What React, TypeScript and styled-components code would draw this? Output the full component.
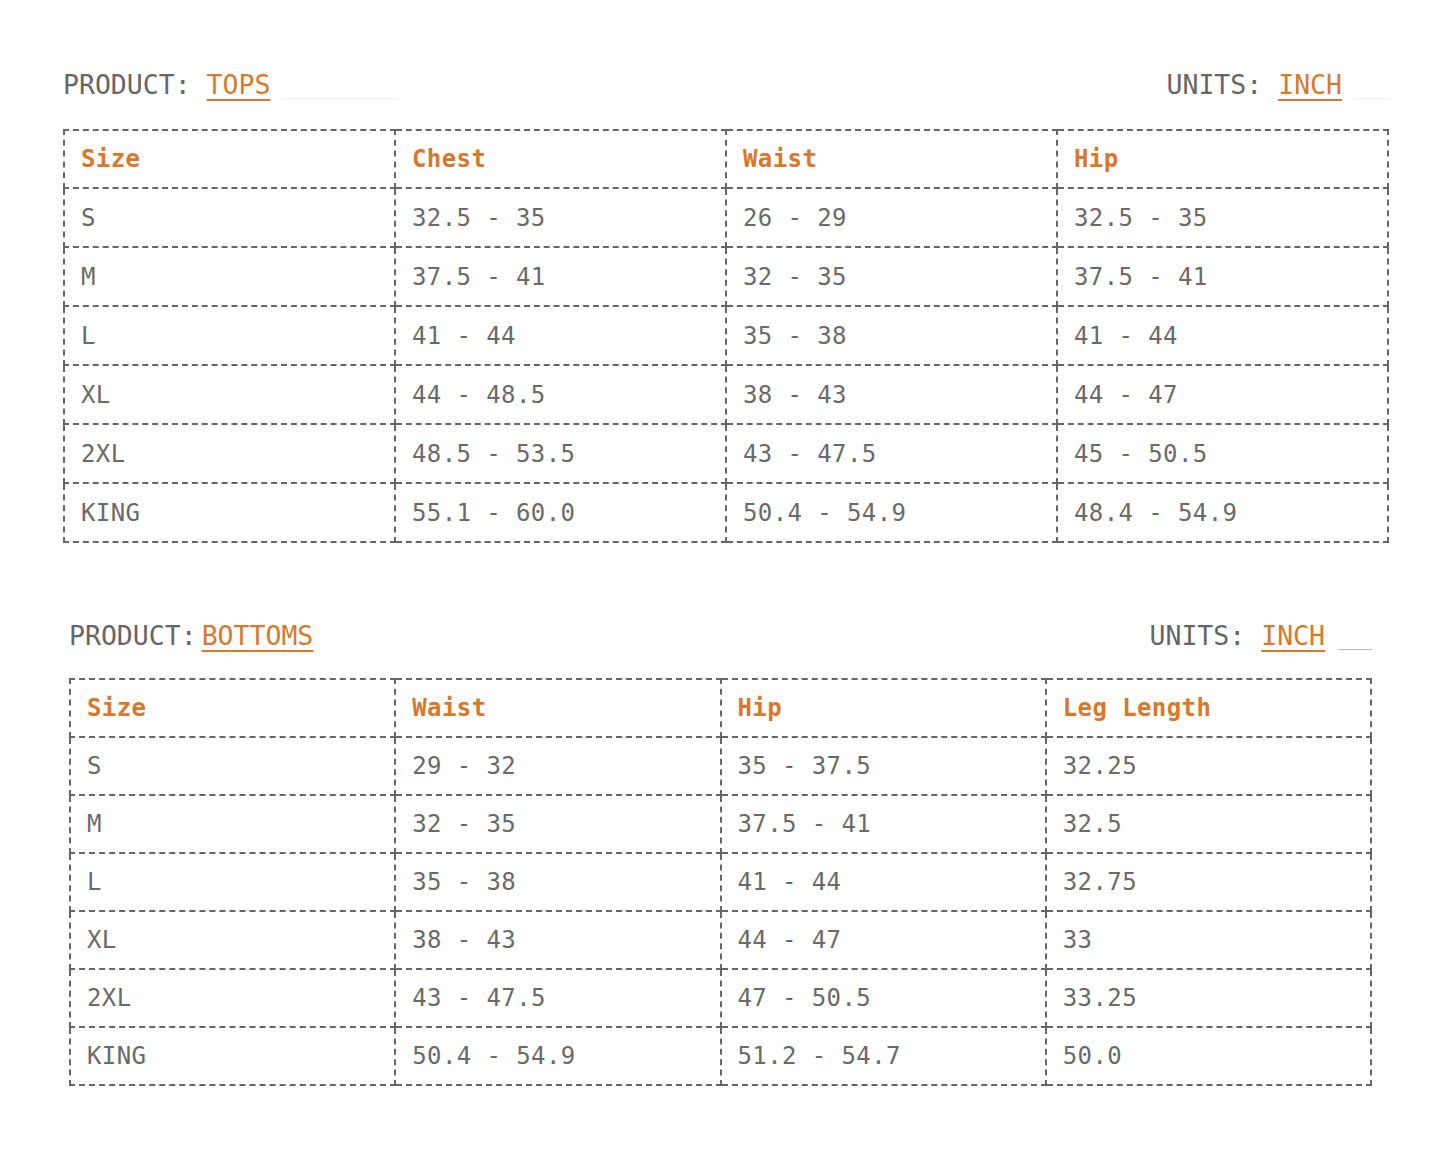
import { FC } from 'react';
import styled, { createGlobalStyle } from 'styled-components';

const GlobalStyle = createGlobalStyle`
  body {
    margin: 0;
    background: #fff;
    font-family: 'DejaVu Sans Mono', 'Liberation Mono', monospace;
  }
`;

const Page = styled.div`
  width: 1452px;
  padding-top: 70px;
  padding-bottom: 60px;
`;

const Section = styled.section<{ $left: number; $width: number; $gap: number }>`
  margin-left: ${(p) => p.$left}px;
  width: ${(p) => p.$width}px;
  & + & {
    margin-top: 78px;
  }
  display: flex;
  flex-direction: column;
  gap: ${(p) => p.$gap}px;
`;

const TitleRow = styled.div`
  display: flex;
  justify-content: space-between;
  align-items: flex-end;
  height: 30px;
  font-size: 26.5px;
  line-height: 30px;
  color: #666;
`;

const Label = styled.div`
  display: flex;
  align-items: flex-end;
  white-space: pre;
`;

const Value = styled.span<{ $tight?: boolean }>`
  color: #d9782b;
  margin-left: ${(p) => (p.$tight ? 5 : 0)}px;
  text-decoration: underline;
  text-underline-offset: 5px;
  text-decoration-thickness: 2px;
`;

const Blank = styled.span<{ $width: number; $tone: string }>`
  display: inline-block;
  width: ${(p) => p.$width}px;
  margin-left: 13px;
  margin-bottom: 1px;
  border-bottom: 1px solid ${(p) => p.$tone};
`;

const Table = styled.table`
  width: 100%;
  table-layout: fixed;
  border-collapse: collapse;
  font-size: 24px;
  letter-spacing: 0.4px;
  color: #6a6a6a;
`;

const Th = styled.th`
  text-align: left;
  font-weight: bold;
  color: #d9782b;
  height: 56px;
  padding: 0 0 0 16px;
  border: 2px dashed #666;
`;

const Td = styled.td<{ $h: number }>`
  height: ${(p) => p.$h}px;
  padding: 0 0 0 16px;
  border: 2px dashed #666;
  white-space: pre;
`;

type Chart = {
  product: string;
  headers: string[];
  rows: string[][];
  left: number;
  width: number;
  gap: number;
  rowHeight: number;
  tight: boolean;
  leftBlank: number;
  rightBlank: number;
  blankTone: string;
};

const charts: Chart[] = [
  {
    product: 'TOPS',
    headers: ['Size', 'Chest', 'Waist', 'Hip'],
    rows: [
      ['S', '32.5 - 35', '26 - 29', '32.5 - 35'],
      ['M', '37.5 - 41', '32 - 35', '37.5 - 41'],
      ['L', '41 - 44', '35 - 38', '41 - 44'],
      ['XL', '44 - 48.5', '38 - 43', '44 - 47'],
      ['2XL', '48.5 - 53.5', '43 - 47.5', '45 - 50.5'],
      ['KING', '55.1 - 60.0', '50.4 - 54.9', '48.4 - 54.9'],
    ],
    left: 63,
    width: 1326,
    gap: 29,
    rowHeight: 57,
    tight: false,
    leftBlank: 115,
    rightBlank: 34,
    blankTone: '#f0f0f0',
  },
  {
    product: 'BOTTOMS',
    headers: ['Size', 'Waist', 'Hip', 'Leg Length'],
    rows: [
      ['S', '29 - 32', '35 - 37.5', '32.25'],
      ['M', '32 - 35', '37.5 - 41', '32.5'],
      ['L', '35 - 38', '41 - 44', '32.75'],
      ['XL', '38 - 43', '44 - 47', '33'],
      ['2XL', '43 - 47.5', '47 - 50.5', '33.25'],
      ['KING', '50.4 - 54.9', '51.2 - 54.7', '50.0'],
    ],
    left: 69,
    width: 1303,
    gap: 27,
    rowHeight: 56,
    tight: true,
    leftBlank: 0,
    rightBlank: 34,
    blankTone: '#bbb',
  },
];

const SizeChart: FC<{ chart: Chart }> = ({ chart }) => (
  <Section $left={chart.left} $width={chart.width} $gap={chart.gap}>
    <TitleRow>
      <Label>
        {chart.tight ? 'PRODUCT:' : 'PRODUCT: '}
        <Value $tight={chart.tight}>{chart.product}</Value>
        {chart.leftBlank > 0 && <Blank $width={chart.leftBlank} $tone={chart.blankTone} />}
      </Label>
      <Label>
        {'UNITS: '}
        <Value>INCH</Value>
        <Blank $width={chart.rightBlank} $tone={chart.blankTone} />
      </Label>
    </TitleRow>
    <Table>
      <thead>
        <tr>
          {chart.headers.map((h) => (
            <Th key={h}>{h}</Th>
          ))}
        </tr>
      </thead>
      <tbody>
        {chart.rows.map((row) => (
          <tr key={row[0]}>
            {row.map((cell, i) => (
              <Td key={i} $h={chart.rowHeight}>
                {cell}
              </Td>
            ))}
          </tr>
        ))}
      </tbody>
    </Table>
  </Section>
);

const App: FC = () => (
  <>
    <GlobalStyle />
    <Page>
      {charts.map((c) => (
        <SizeChart key={c.product} chart={c} />
      ))}
    </Page>
  </>
);

export default App;
